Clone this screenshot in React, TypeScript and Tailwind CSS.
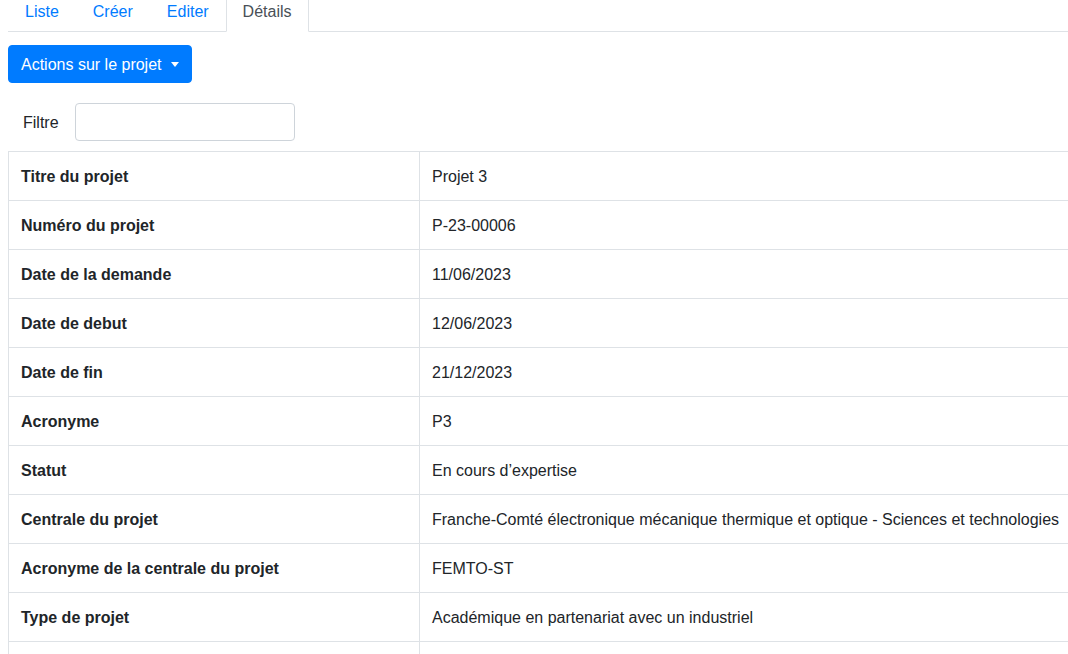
import { useState } from 'react'

const rows: [string, string][] = [
  ['Titre du projet', 'Projet 3'],
  ['Numéro du projet', 'P-23-00006'],
  ['Date de la demande', '11/06/2023'],
  ['Date de debut', '12/06/2023'],
  ['Date de fin', '21/12/2023'],
  ['Acronyme', 'P3'],
  ['Statut', 'En cours d’expertise'],
  ['Centrale du projet', 'Franche-Comté électronique mécanique thermique et optique - Sciences et technologies'],
  ['Acronyme de la centrale du projet', 'FEMTO-ST'],
  ['Type de projet', 'Académique en partenariat avec un industriel'],
  ['', ''],
]

const tabs = ['Liste', 'Créer', 'Editer', 'Détails']

const App = () => {
  const [active, setActive] = useState('Détails')
  const [filter, setFilter] = useState('')

  return (
    <div className="h-[654px] w-[1068px] overflow-hidden bg-white pl-2 font-['Liberation_Sans',Arial,sans-serif] text-base text-[#212529]">
      <ul className="-mt-[10px] flex border-b border-[#dee2e6]">
        {tabs.map((t) => (
          <li key={t} className="-mb-px">
            <button
              onClick={() => setActive(t)}
              className={
                active === t
                  ? 'rounded-t border border-[#dee2e6] border-b-white bg-white px-4 pt-[9px] pb-[7px] leading-6 text-[#495057]'
                  : 'rounded-t border border-transparent px-4 pt-[9px] pb-[7px] leading-6 text-[#007bff]'
              }
            >
              {t}
            </button>
          </li>
        ))}
      </ul>

      <div className="mt-[13px]">
        <button className="flex items-center rounded border border-[#007bff] bg-[#007bff] px-3 pt-[7px] pb-[5px] leading-6 text-white">
          Actions sur le projet
          <span className="mb-[2px] ml-[9px] inline-block h-0 w-0 border-x-[4px] border-t-[5px] border-x-transparent border-t-white" />
        </button>
      </div>

      <div className="mt-5 flex items-center pl-[15px]">
        <label className="mt-[2px] mr-4 leading-6">Filtre</label>
        <input
          value={filter}
          onChange={(e) => setFilter(e.target.value)}
          className="h-[38px] w-[220px] rounded border border-[#ced4da] px-3 outline-none"
        />
      </div>

      <table className="mt-2.5 w-[1090px] border-collapse">
        <tbody>
          {rows.map(([k, v], i) => (
            <tr key={i}>
              <th className="w-[411px] border border-[#dee2e6] px-3 pt-[13px] pb-[11px] text-left font-bold leading-6">{k}</th>
              <td className="border border-[#dee2e6] px-3 pt-[13px] pb-[11px] leading-6 whitespace-nowrap">{v}</td>
            </tr>
          ))}
        </tbody>
      </table>
    </div>
  )
}

export default App
